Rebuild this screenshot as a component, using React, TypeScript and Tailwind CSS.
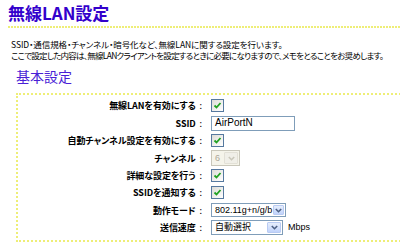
import React from "react";

const dotH =
  "bg-[repeating-linear-gradient(90deg,#eeee77_0px,#eeee77_2px,transparent_2px,transparent_3px)]";

function Check() {
  return (
    <div className="w-[13px] h-[13px] border border-[#56799f] bg-[linear-gradient(135deg,#dcdcd7,#ffffff)] flex items-center justify-center">
      <svg width="9" height="9" viewBox="0 0 9 9">
        <path d="M1.5 4.5 L3.5 6.5 L7.5 2" fill="none" stroke="#21a121" strokeWidth="1.8" />
      </svg>
    </div>
  );
}

function Chevron({ color }: { color: string }) {
  return (
    <svg width="7" height="5" viewBox="0 0 7 5">
      <path d="M0.8 1 L3.5 3.7 L6.2 1" fill="none" stroke={color} strokeWidth="1.6" />
    </svg>
  );
}

function Select({
  text,
  width,
  disabled,
  height,
}: {
  text: string;
  width: string;
  disabled?: boolean;
  height: string;
}) {
  return (
    <div
      className={`${width} ${height} flex items-stretch border ${
        disabled ? "border-[#c9c7ba] bg-[#f5f4ea]" : "border-[#7f9db9] bg-white"
      }`}
    >
      <div
        className={`flex-1 flex items-center pl-[3px] text-[9px] leading-none font-['Liberation_Sans','Noto_Sans_CJK_JP',sans-serif] ${
          disabled ? "text-[#aca899]" : "text-black"
        }`}
      >
        {text}
      </div>
      <div
        className={`w-[14px] m-[1px] flex items-center justify-center rounded-[1px] ${
          disabled
            ? "bg-[#f0efe8] border border-[#e2e0d6]"
            : "bg-[linear-gradient(180deg,#e6eefc,#c1d3fb)] border border-[#b9cbf3]"
        }`}
      >
        <Chevron color={disabled ? "#c9c7ba" : "#4d6185"} />
      </div>
    </div>
  );
}

const rows: { label: string; h: string; el: React.ReactNode }[] = [
  { label: "無線LANを有効にする", h: "h-[18px]", el: <Check /> },
  {
    label: "SSID",
    h: "h-[18px]",
    el: (
      <div className="w-[84px] h-[15px] border border-[#7f9db9] bg-white flex items-center pl-[3px] text-[10px] leading-none text-black font-['Liberation_Sans',sans-serif]">
        AirPortN
      </div>
    ),
  },
  { label: "自動チャンネル設定を有効にする", h: "h-[17px]", el: <Check /> },
  {
    label: "チャンネル",
    h: "h-[18px]",
    el: <Select text="6" width="w-[29px]" height="h-[16px]" disabled />,
  },
  { label: "詳細な設定を行う", h: "h-[17px]", el: <Check /> },
  { label: "SSIDを通知する", h: "h-[17px]", el: <Check /> },
  {
    label: "動作モード",
    h: "h-[18px]",
    el: <Select text="802.11g+n/g/b" width="w-[75px]" height="h-[14px]" />,
  },
  {
    label: "送信速度",
    h: "h-[17px]",
    el: (
      <div className="flex items-center gap-[5px]">
        <Select text="自動選択" width="w-[72px]" height="h-[15px]" />
        <span className="text-[9px] text-black font-['Liberation_Sans',sans-serif]">Mbps</span>
      </div>
    ),
  },
];

export default function App() {
  return (
    <div className="w-[400px] h-[251px] overflow-hidden bg-white font-['Noto_Sans_CJK_JP',sans-serif] [font-feature-settings:'palt']">
      <div className="pl-[8px] pt-[3px]">
        <h1 className="text-[17px] font-bold leading-[20px] text-[#3300cc]">無線LAN設定</h1>
        <div className={`mt-[3px] h-[2px] ${dotH}`} />
      </div>
      <div className="pl-[11px] pt-[11px] text-[8.5px] leading-[11px] text-black whitespace-nowrap">
        <p className="tracking-[-0.06px]">SSID・通信規格・チャンネル・暗号化など、無線LANに関する設定を行います。</p>
        <p className="tracking-[-0.75px]">ここで設定した内容は、無線LANクライアントを設定するときに必要になりますので、メモをとることをお奨めします。</p>
      </div>
      <h2 className="pl-[16px] pt-[6px] text-[14px] leading-[18px] text-[#4a1fd6]">基本設定</h2>
      <div className="ml-[16px] mt-[8px] w-[420px] border-2 border-r-0 border-dotted border-[#eeee77] pt-[1px] pb-[4px]">
        {rows.map((r) => (
          <div key={r.label} className={`flex items-center ${r.h}`}>
            <div className="w-[184px] text-right text-[9px] tracking-[-0.1px] font-bold leading-none text-black">
              {r.label}
              <span className="ml-[4px] font-normal">:</span>
            </div>
            <div className="ml-[9px] flex items-center">{r.el}</div>
          </div>
        ))}
      </div>
    </div>
  );
}
